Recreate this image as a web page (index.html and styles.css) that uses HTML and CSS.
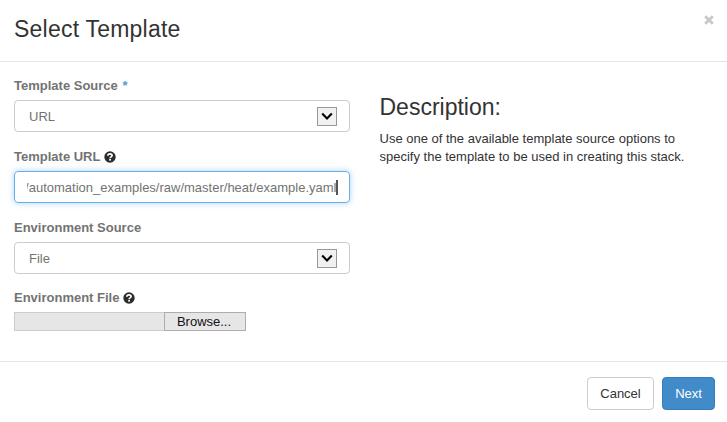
FILE: index.html
```html
<!DOCTYPE html>
<html lang="en">
<head>
<meta charset="utf-8">
<title>Select Template</title>
<link rel="stylesheet" href="styles.css">
</head>
<body>
<svg class="defs" width="0" height="0" aria-hidden="true">
  <symbol id="help" viewBox="0 0 12 12">
    <circle cx="6" cy="6" r="5.7" fill="#2b2b2b"/>
    <path d="M3.8 4.7C3.9 3.4 4.9 2.8 6 2.8c1.2 0 2.1.7 2.1 1.7 0 1.4-2 1.3-2 2.7" fill="none" stroke="#fff" stroke-width="1.7"/>
    <rect x="5.2" y="8" width="1.8" height="1.6" fill="#fff"/>
  </symbol>
  <symbol id="chevron" viewBox="0 0 18 17">
    <path d="M4.2 5.6L9 10.4l4.8-4.8" fill="none" stroke="#000" stroke-width="2.1"/>
  </symbol>
</svg>
<div class="modal">
  <header class="modal-header">
    <h1>Select Template</h1>
    <svg class="close" viewBox="0 0 10 10"><path d="M1.2 1.2l7.6 7.6M8.8 1.2L1.2 8.8" stroke="#c8c8c8" stroke-width="2.8"/></svg>
  </header>
  <main class="modal-body">
    <form class="fields">
      <div class="group">
        <label>Template Source <span class="required">*</span></label>
        <div class="control select"><span>URL</span><svg class="arrow"><use href="#chevron"/></svg></div>
      </div>
      <div class="group">
        <label>Template URL <svg class="help"><use href="#help"/></svg></label>
        <div class="control focused"><div class="value"><span>/automation_examples/raw/master/heat/example.yaml</span></div><i class="caret"></i></div>
      </div>
      <div class="group">
        <label>Environment Source</label>
        <div class="control select"><span>File</span><svg class="arrow"><use href="#chevron"/></svg></div>
      </div>
      <div class="group">
        <label>Environment File <svg class="help"><use href="#help"/></svg></label>
        <div class="file"><span class="file-name"></span><span class="browse">Browse...</span></div>
      </div>
    </form>
    <section class="description">
      <h2>Description:</h2>
      <p>Use one of the available template source options to<br>specify the template to be used in creating this stack.</p>
    </section>
  </main>
  <footer class="modal-footer">
    <div class="btn cancel">Cancel</div>
    <div class="btn next">Next</div>
  </footer>
</div>
</body>
</html>
```
FILE: styles.css
```css
* { box-sizing: border-box; }
body {
  margin: 0;
  background: #fff;
  color: #333;
  font: 13px/18px "Liberation Sans", Arial, sans-serif;
}
.defs { display: none; }
.modal { height: 422px; overflow: hidden; }
.modal-header {
  display: flex;
  justify-content: space-between;
  height: 62px;
  padding: 15px 13px 0 14px;
  border-bottom: 1px solid #e5e5e5;
}
h1, h2 { margin: 0; font-weight: normal; font-size: 23px; line-height: 28px; }
h1 { letter-spacing: .22px; }
.close { width: 10px; height: 10px; }
.modal-body {
  display: flex;
  gap: 30px;
  height: 299px;
  padding: 15px 14px 0;
}
.fields { width: 335.5px; }
.group { height: 71px; }
.group:nth-child(3) { height: 70px; }
label {
  display: flex;
  align-items: center;
  height: 18px;
  margin-bottom: 5px;
  color: #737373;
  font-weight: bold;
  white-space: pre;
}
.required { margin-left: 1px; color: #5b97d2; }
.help { width: 12px; height: 12px; }
.control {
  display: flex;
  align-items: center;
  height: 32px;
  padding: 0 12px 0 14px;
  border: 1px solid #ccc;
  border-radius: 4px;
  color: #737373;
}
.select { justify-content: space-between; }
.select span, .value span { position: relative; top: 1px; }
.arrow {
  width: 20px;
  height: 19px;
  border: 1px solid #999;
  background: #f1f1f1;
}
.focused {
  padding: 0 11px 0 12px;
  border-color: #66afe9;
  box-shadow: 0 0 6px rgba(102, 175, 233, .55);
}
.value {
  display: flex;
  justify-content: flex-end;
  flex: 1;
  min-width: 0;
  overflow: hidden;
  white-space: nowrap;
}
.caret { width: 2px; height: 15px; margin-left: -1px; background: #555; }
.file { display: flex; width: 232px; height: 19px; }
.file-name { width: 150px; border: 1px solid #ccc; border-right: 0; background: #e6e6e6; }
.browse {
  flex: 1;
  padding-right: 2px;
  border: 1px solid #adadad;
  background: #e6e6e6;
  color: #111;
  line-height: 17px;
  text-align: center;
}
.description { padding-top: 16px; }
.description p { margin: 9px 0 0; }
.modal-footer {
  display: flex;
  justify-content: flex-end;
  gap: 8px;
  padding: 15px 12px 0;
  border-top: 1px solid #e5e5e5;
}
.btn {
  height: 33px;
  border: 1px solid #ccc;
  border-radius: 4px;
  line-height: 31px;
  text-align: center;
}
.cancel { width: 67px; }
.next { width: 53px; border-color: #357ebd; background: #428bca; color: #fff; }
```
